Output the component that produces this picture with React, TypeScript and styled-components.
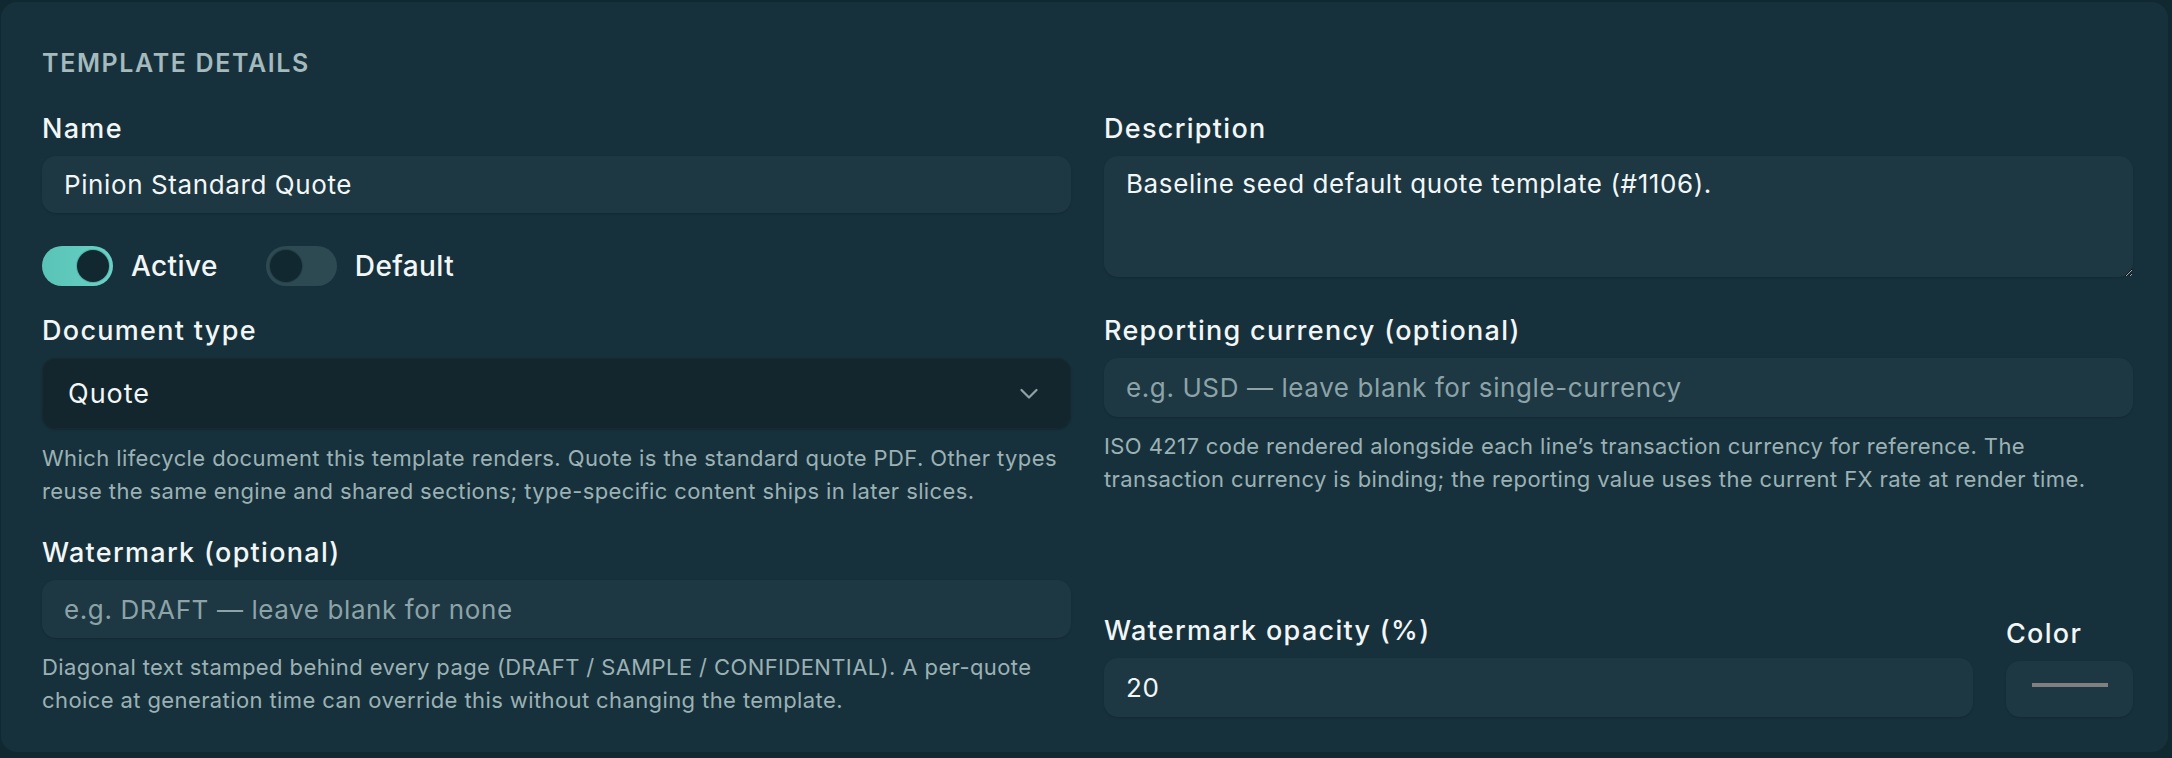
import React from 'react';
import styled, { createGlobalStyle } from 'styled-components';

const GlobalStyle = createGlobalStyle`
  html, body {
    margin: 0;
    padding: 0;
    background: #10282f;
  }
  body {
    font-family: "Inter", "Noto Sans", sans-serif;
    color: #eef4f4;
  }
  * { box-sizing: border-box; }
`;

// ─── shell ─────────────────────────────────────────────

const Page = styled.div`
  padding: 2px 4px 6px 1px;
`;

const Card = styled.section`
  background: #17313c;
  border-radius: 16px;
  height: 750px;
  padding: 43px 35px 0 41px;
  overflow: hidden;
`;

const SectionTitle = styled.h2`
  margin: 0 0 30px;
  font-size: 25px;
  font-weight: 600;
  line-height: 36px;
  letter-spacing: 0.065em;
  text-transform: uppercase;
  color: #a4babd;
`;

const Grid = styled.div`
  display: grid;
  grid-template-columns: 1fr 1fr;
  column-gap: 33px;
  row-gap: 27px;
`;

const Stack = styled.div<{ $gap?: number }>`
  display: flex;
  flex-direction: column;
  gap: ${(p) => p.$gap ?? 0}px;
`;

const BottomRow = styled.div`
  display: flex;
  align-items: flex-end;
  gap: 33px;
`;

// ─── fields ────────────────────────────────────────────

const Field = styled.label<{ $grow?: boolean }>`
  display: flex;
  flex-direction: column;
  gap: 9px;
  ${(p) => (p.$grow ? 'flex: 1;' : '')}
`;

const Label = styled.span`
  font-size: 27px;
  font-weight: 500;
  line-height: 36px;
  letter-spacing: 1.3px;
  color: #f2f6f6;
`;

const TextInput = styled.input<{ $h?: number }>`
  height: ${(p) => p.$h ?? 58}px;
  width: 100%;
  border: none;
  outline: none;
  border-radius: 14px;
  padding: 0 22px;
  background: #1d3843;
  box-shadow: 0 1px 2px rgba(0, 0, 0, 0.18);
  font-family: inherit;
  font-size: 26px;
  letter-spacing: 0.6px;
  color: #f2f6f6;

  &::placeholder {
    color: #8da3a7;
  }
`;

const TextArea = styled.textarea`
  height: 121px;
  width: 100%;
  border: none;
  outline: none;
  border-radius: 14px;
  padding: 10px 22px;
  background: #1d3843;
  box-shadow: 0 1px 2px rgba(0, 0, 0, 0.18);
  font-family: inherit;
  font-size: 26px;
  line-height: 36px;
  letter-spacing: 0.6px;
  color: #f2f6f6;
  resize: vertical;
`;

const SelectBox = styled.div`
  height: 71px;
  display: flex;
  align-items: center;
  justify-content: space-between;
  padding: 0 33px 0 26px;
  border-radius: 14px;
  background: #13262d;
  box-shadow: inset 0 0 0 1px rgba(255, 255, 255, 0.02), 0 1px 2px rgba(0, 0, 0, 0.2);
  font-size: 27px;
  letter-spacing: 1px;
  color: #f2f6f6;
`;

const Help = styled.p`
  margin: 13px 0 0;
  font-size: 22px;
  line-height: 33px;
  letter-spacing: 0.4px;
  color: #9cb1b4;
`;

// ─── toggles ───────────────────────────────────────────

const ToggleRow = styled.div`
  display: flex;
  align-items: center;
  gap: 48px;
`;

const ToggleItem = styled.div`
  display: flex;
  align-items: center;
  gap: 18px;
  font-size: 28px;
  font-weight: 500;
  letter-spacing: 0.4px;
  color: #f2f6f6;
`;

const Track = styled.span<{ $on: boolean }>`
  position: relative;
  width: 71px;
  height: 40px;
  border-radius: 20px;
  background: ${(p) =>
    p.$on ? 'linear-gradient(90deg, #58c3b6 0%, #6ad1c6 100%)' : '#2d4a53'};
`;

const Knob = styled.span<{ $on: boolean }>`
  position: absolute;
  top: 4px;
  left: ${(p) => (p.$on ? 35 : 4)}px;
  width: 32px;
  height: 32px;
  border-radius: 50%;
  background: #112830;
  box-shadow: 0 0 0 1px rgba(0, 0, 0, 0.15);
`;

const Toggle: React.FC<{ on: boolean; label: string }> = ({ on, label }) => (
  <ToggleItem>
    <Track $on={on}>
      <Knob $on={on} />
    </Track>
    {label}
  </ToggleItem>
);

// ─── colour swatch ─────────────────────────────────────

const ColorField = styled(Field)`
  width: 127px;
`;

const Swatch = styled.div`
  height: 56px;
  border-radius: 14px;
  background: #1d3843;
  box-shadow: 0 1px 2px rgba(0, 0, 0, 0.18);
  padding: 22px 25px 0 26px;
`;

const SwatchBar = styled.div<{ $color: string }>`
  height: 4px;
  background: ${(p) => p.$color};
`;

const Chevron = () => (
  <svg width="18" height="12" viewBox="0 0 18 12" fill="none">
    <polyline
      points="1.5,2 9,9.5 16.5,2"
      stroke="#8fa3a6"
      strokeWidth="2.2"
      strokeLinecap="round"
      strokeLinejoin="round"
    />
  </svg>
);

export default function App() {
  return (
    <>
      <GlobalStyle />
      <Page>
        <Card>
          <SectionTitle>Template details</SectionTitle>
          <Grid>
            <Stack $gap={33}>
              <Field>
                <Label>Name</Label>
                <TextInput $h={57} defaultValue="Pinion Standard Quote" />
              </Field>
              <ToggleRow>
                <Toggle on label="Active" />
                <Toggle on={false} label="Default" />
              </ToggleRow>
            </Stack>

            <Field>
              <Label>Description</Label>
              <TextArea defaultValue="Baseline seed default quote template (#1106)." />
            </Field>

            <Stack>
              <Field>
                <Label>Document type</Label>
                <SelectBox>
                  <span>Quote</span>
                  <Chevron />
                </SelectBox>
              </Field>
              <Help>
                Which lifecycle document this template renders. Quote is the standard quote PDF. Other types
                <br />
                reuse the same engine and shared sections; type-specific content ships in later slices.
              </Help>
            </Stack>

            <Stack>
              <Field>
                <Label>Reporting currency (optional)</Label>
                <TextInput $h={59} placeholder="e.g. USD — leave blank for single-currency" />
              </Field>
              <Help>
                ISO 4217 code rendered alongside each line’s transaction currency for reference. The
                <br />
                transaction currency is binding; the reporting value uses the current FX rate at render time.
              </Help>
            </Stack>

            <Stack>
              <Field>
                <Label>Watermark (optional)</Label>
                <TextInput $h={58} placeholder="e.g. DRAFT — leave blank for none" />
              </Field>
              <Help>
                Diagonal text stamped behind every page (DRAFT / SAMPLE / CONFIDENTIAL). A per-quote
                <br />
                choice at generation time can override this without changing the template.
              </Help>
            </Stack>

            <BottomRow>
              <Field $grow>
                <Label>Watermark opacity (%)</Label>
                <TextInput $h={59} defaultValue="20" />
              </Field>
              <ColorField>
                <Label>Color</Label>
                <Swatch>
                  <SwatchBar $color="#808080" />
                </Swatch>
              </ColorField>
            </BottomRow>
          </Grid>
        </Card>
      </Page>
    </>
  );
}
